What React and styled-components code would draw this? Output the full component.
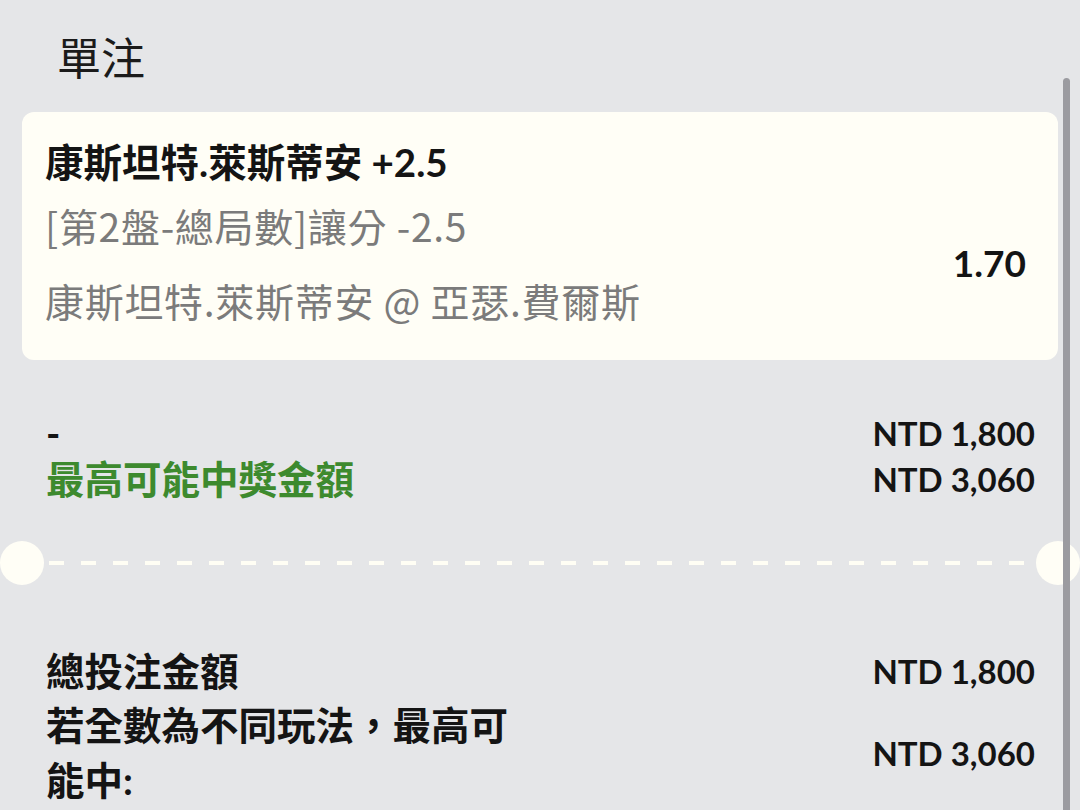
import React from "react";
import styled, { createGlobalStyle } from "styled-components";

const GlobalStyle = createGlobalStyle`
  html, body {
    margin: 0;
    padding: 0;
    background: #e5e6e8;
  }
  body {
    font-family: "Lato", "Noto Sans CJK TC", sans-serif;
    color: #111;
  }
`;

const bet = {
  selection: "康斯坦特.萊斯蒂安 +2.5",
  market: "[第2盤-總局數]讓分 -2.5",
  event: "康斯坦特.萊斯蒂安 @ 亞瑟.費爾斯",
  odds: "1.70",
  stake: "NTD 1,800",
  payout: "NTD 3,060",
};

const App = () => {
  return (
    <Page>
      <GlobalStyle />
      <Content>
        <Title>單注</Title>
        <Card>
          <Selection>{bet.selection}</Selection>
          <CardBody>
            <Details>
              <div>{bet.market}</div>
              <div>{bet.event}</div>
            </Details>
            <Odds>{bet.odds}</Odds>
          </CardBody>
        </Card>

        <Summary>
          <Row>
            <Label>-</Label>
            <Amount>{bet.stake}</Amount>
          </Row>
          <Row>
            <Label $green>最高可能中獎金額</Label>
            <Amount>{bet.payout}</Amount>
          </Row>
        </Summary>

        <Divider>
          <Notch $side="left" />
          <Dashes />
          <Notch $side="right" />
        </Divider>

        <Totals>
          <Row>
            <Label>總投注金額</Label>
            <Amount>{bet.stake}</Amount>
          </Row>
          <Row>
            <WrapLabel>若全數為不同玩法，最高可能中:</WrapLabel>
            <Amount>{bet.payout}</Amount>
          </Row>
        </Totals>
      </Content>
      <ScrollThumb />
    </Page>
  );
};

const Page = styled.div`
  position: relative;
  height: 810px;
  overflow: hidden;
  background: #e5e6e8;
`;

const Content = styled.div`
  padding: 0 22px;
`;

const Title = styled.h1`
  margin: 0;
  padding: 36px 0 0 35px;
  font-size: 44px;
  line-height: 44px;
  font-weight: 400;
  color: #1b1b1b;
`;

const Card = styled.div`
  margin-top: 32px;
  background: #fffef6;
  border-radius: 12px;
  padding: 27px 32px 37px 23px;
`;

const Selection = styled.div`
  font-size: 38.5px;
  line-height: 46px;
  font-weight: 700;
  color: #141414;
`;

const CardBody = styled.div`
  display: flex;
  align-items: center;
  justify-content: space-between;
  margin-top: 17px;
`;

const Details = styled.div`
  display: flex;
  flex-direction: column;
  gap: 29px;
  font-family: "Noto Sans CJK TC", sans-serif;
  color: #7b7b7b;
  font-size: 39px;
  letter-spacing: 0.7px;
  line-height: 46px;
`;

const Odds = styled.div`
  font-size: 37px;
  font-weight: 700;
  color: #141414;
`;

const Summary = styled.div`
  margin-top: 50px;
  padding: 0 23px 0 24px;
`;

const Row = styled.div`
  display: flex;
  align-items: center;
  justify-content: space-between;
`;

const Label = styled.div`
  font-size: 38.5px;
  line-height: 46px;
  font-weight: 700;
  color: ${(p) => (p.$green ? "#3d8a2e" : "#141414")};
`;

const WrapLabel = styled(Label)`
  max-width: 480px;
  line-height: 55px;
`;

const Amount = styled.div`
  font-size: 33px;
  line-height: 44px;
  font-weight: 700;
  color: #141414;
`;

const Divider = styled.div`
  display: flex;
  align-items: center;
  margin-top: 39px;
`;

const Notch = styled.div`
  width: 44px;
  height: 44px;
  border-radius: 50%;
  background: #fffef6;
  flex-shrink: 0;
  margin-left: ${(p) => (p.$side === "left" ? "-22px" : "0")};
  margin-right: ${(p) => (p.$side === "right" ? "-22px" : "0")};
`;

const Dashes = styled.div`
  flex: 1;
  height: 4px;
  margin: 0 6px 0 5px;
  background: repeating-linear-gradient(
    to right,
    #fffef4 0 15px,
    transparent 15px 32px
  );
`;

const Totals = styled.div`
  margin-top: 63px;
  padding: 0 23px 0 24px;
  display: flex;
  flex-direction: column;
  gap: 4px;
`;

const ScrollThumb = styled.div`
  position: absolute;
  right: 10px;
  top: 78px;
  bottom: -10px;
  width: 7px;
  border-radius: 4px;
  background: #9b9ba0;
`;

export default App;
